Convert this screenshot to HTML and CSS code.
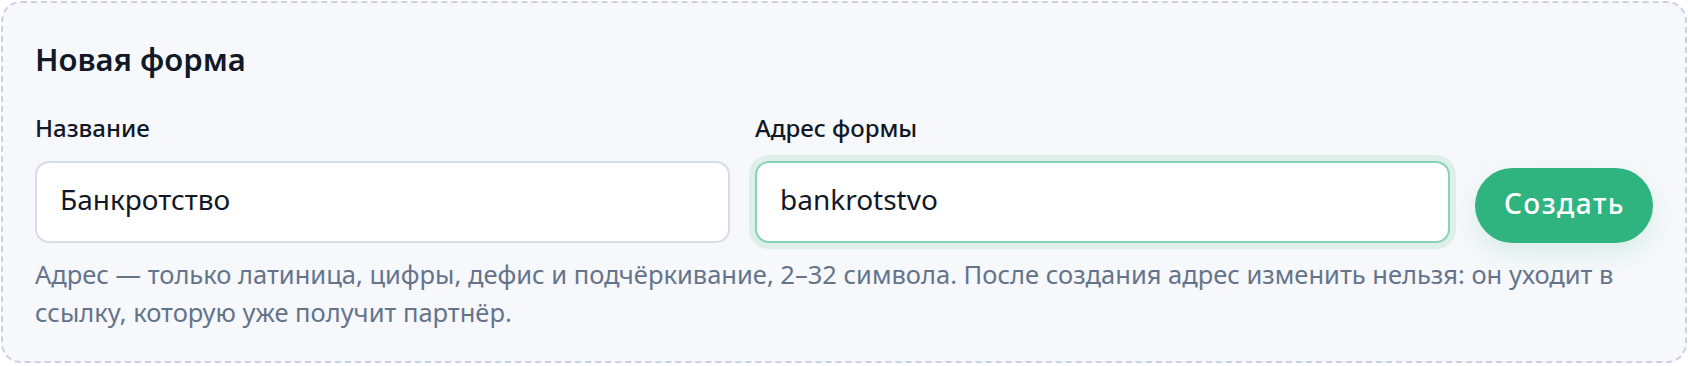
FILE: index.html
```html
<!DOCTYPE html>
<html lang="ru">
<head>
    <meta charset="UTF-8">
    <meta name="viewport" content="width=device-width, initial-scale=1.0">
    <title>Новая форма</title>
    <link rel="stylesheet" href="styles.css">
</head>
<body>
    <div class="form-card">
        <h1>Новая форма</h1>
        <div class="form-row">
            <div class="form-group">
                <label for="formName">Название</label>
                <input type="text" id="formName" value="Банкротство">
            </div>
            <div class="form-group">
                <label for="formSlug">Адрес формы</label>
                <input type="text" id="formSlug" class="is-focused" value="bankrotstvo" maxlength="32">
            </div>
            <button class="create-button">Создать</button>
        </div>
        <p class="hint">Адрес — только латиница, цифры, дефис и подчёркивание, 2–32 символа. После создания адрес изменить нельзя: он уходит в ссылку, которую уже получит партнёр.</p>
    </div>
</body>
</html>
```

FILE: styles.css
```css
body {
    margin: 0;
    padding: 1px 1px 0 1px;
    background: #ffffff;
    font-family: 'Noto Sans', 'Open Sans', sans-serif;
    color: #111827;
}
.form-card {
    background: #f7f8fb;
    border: 2px dashed #cbd2e2;
    border-radius: 20px;
    padding: 38px 32px 30px 32px;
}
h1 {
    margin: 0 0 34px 0;
    font-size: 31px;
    line-height: 37px;
    font-weight: 600;
    color: #111827;
}
.form-row {
    display: grid;
    grid-template-columns: 1fr 1fr auto;
    gap: 25px;
    align-items: end;
}
label {
    display: block;
    margin-bottom: 17px;
    font-size: 24px;
    line-height: 32px;
    font-weight: 500;
    color: #111827;
}
input {
    display: block;
    box-sizing: border-box;
    width: 100%;
    height: 82px;
    padding: 0 22px 7px 23px;
    border: 2px solid #d6dce8;
    border-radius: 14px;
    background: #fff;
    font-family: inherit;
    font-size: 28px;
    color: #111827;
    outline: none;
}
input.is-focused,
input:focus {
    border-color: #88d3b3;
    box-shadow: 0 0 0 6px #ddefe8;
}
.create-button {
    height: 75px;
    padding: 0 28px 5px 29px;
    border: none;
    border-radius: 38px;
    background: #2fb37f;
    color: #fff;
    font-family: inherit;
    font-size: 28px;
    font-weight: 500;
    letter-spacing: 1.5px;
    cursor: pointer;
    box-shadow: 0 10px 26px rgba(47, 179, 127, 0.16);
}
.hint {
    margin: 12px 0 0 0;
    font-size: 25.5px;
    line-height: 38px;
    color: #64748b;
}
```
